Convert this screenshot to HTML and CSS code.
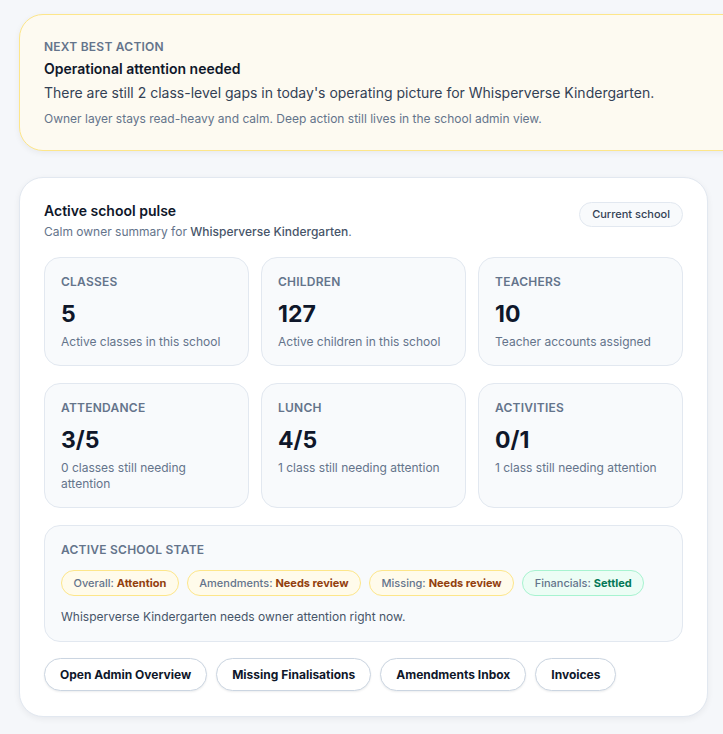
FILE: index.html
```html
<!DOCTYPE html>
<html lang="en">
<head>
<meta charset="utf-8">
<title>Owner overview</title>
<link rel="stylesheet" href="styles.css">
</head>
<body>
<main class="page">
  <section class="nba">
    <div class="eyebrow">Next best action</div>
    <div class="nba-title">Operational attention needed</div>
    <p class="nba-text">There are still 2 class-level gaps in today's operating picture for Whisperverse Kindergarten.</p>
    <p class="nba-note">Owner layer stays read-heavy and calm. Deep action still lives in the school admin view.</p>
  </section>

  <section class="pulse">
    <header class="pulse-head">
      <div>
        <h2 class="pulse-title">Active school pulse</h2>
        <p class="pulse-sub">Calm owner summary for <strong>Whisperverse Kindergarten</strong>.</p>
      </div>
      <span class="chip">Current school</span>
    </header>

    <div class="stats">
      <div class="stat">
        <div class="eyebrow">Classes</div>
        <div class="stat-value">5</div>
        <div class="stat-desc">Active classes in this school</div>
      </div>
      <div class="stat">
        <div class="eyebrow">Children</div>
        <div class="stat-value">127</div>
        <div class="stat-desc">Active children in this school</div>
      </div>
      <div class="stat">
        <div class="eyebrow">Teachers</div>
        <div class="stat-value">10</div>
        <div class="stat-desc">Teacher accounts assigned</div>
      </div>
      <div class="stat">
        <div class="eyebrow">Attendance</div>
        <div class="stat-value">3/5</div>
        <div class="stat-desc">0 classes still needing attention</div>
      </div>
      <div class="stat">
        <div class="eyebrow">Lunch</div>
        <div class="stat-value">4/5</div>
        <div class="stat-desc">1 class still needing attention</div>
      </div>
      <div class="stat">
        <div class="eyebrow">Activities</div>
        <div class="stat-value">0/1</div>
        <div class="stat-desc">1 class still needing attention</div>
      </div>
    </div>

    <div class="state">
      <div class="eyebrow">Active school state</div>
      <div class="pills">
        <span class="pill warn">Overall: <b>Attention</b></span>
        <span class="pill warn">Amendments: <b>Needs review</b></span>
        <span class="pill warn">Missing: <b>Needs review</b></span>
        <span class="pill ok">Financials: <b>Settled</b></span>
      </div>
      <p class="state-text">Whisperverse Kindergarten needs owner attention right now.</p>
    </div>

    <div class="actions">
      <button class="btn">Open Admin Overview</button>
      <button class="btn">Missing Finalisations</button>
      <button class="btn">Amendments Inbox</button>
      <button class="btn">Invoices</button>
    </div>
  </section>
</main>
</body>
</html>
```

FILE: styles.css
```css
* { box-sizing: border-box; }
html, body { margin: 0; padding: 0; }
body {
  background: #f5f7fa;
  font-family: Inter, "Noto Sans", "Liberation Sans", sans-serif;
  color: #0f172a;
  overflow: hidden;
  width: 723px;
  height: 734px;
}
.page {
  padding: 14px 0 0 19px;
  display: flex;
  flex-direction: column;
  gap: 26px;
  align-items: flex-start;
}
.eyebrow {
  font-size: 12px;
  line-height: 16px;
  font-weight: 600;
  letter-spacing: 0.02em;
  text-transform: uppercase;
  color: #64748b;
}
.nba {
  width: 730px;
  background: #fdfaf1;
  border: 1px solid #fde68a;
  border-radius: 24px;
  padding: 24px 24px 22px 24px;
  box-shadow: 0 2px 6px rgba(15, 23, 42, 0.06);
}
.nba-title {
  margin-top: 4px;
  font-size: 14px;
  line-height: 20px;
  font-weight: 600;
}
.nba-text {
  margin: 3px 0 0;
  font-size: 14px;
  line-height: 22px;
  color: #334155;
}
.nba-note {
  margin: 6px 0 0;
  font-size: 12px;
  line-height: 18px;
  color: #64748b;
}
.pulse {
  width: 689px;
  background: #ffffff;
  border: 1px solid #e2e8f0;
  border-radius: 24px;
  padding: 23px 24px 25px;
  box-shadow: 0 2px 6px rgba(15, 23, 42, 0.06);
}
.pulse-head {
  display: flex;
  justify-content: space-between;
  align-items: flex-start;
}
.pulse-title {
  margin: 0;
  font-size: 14px;
  line-height: 20px;
  font-weight: 600;
}
.pulse-sub {
  margin: 2px 0 0;
  font-size: 12px;
  line-height: 18px;
  color: #64748b;
}
.pulse-sub strong { font-weight: 500; color: #475569; }
.chip {
  margin-top: 1px;
  font-size: 11px;
  line-height: 15px;
  font-weight: 500;
  color: #334155;
  background: #f8fafc;
  border: 1px solid #e2e8f0;
  border-radius: 999px;
  padding: 4px 12px;
}
.stats {
  margin-top: 16px;
  display: grid;
  grid-template-columns: repeat(3, 1fr);
  column-gap: 12px;
  row-gap: 17px;
}
.stat {
  background: #f8fafc;
  border: 1px solid #e2e8f0;
  border-radius: 16px;
  padding: 16px 16px 15px;
}
.stat-value {
  margin-top: 9px;
  font-size: 23px;
  line-height: 30px;
  font-weight: 700;
  color: #0f172a;
}
.stat-desc {
  margin-top: 5px;
  font-size: 12px;
  line-height: 16px;
  color: #64748b;
}
.state {
  margin-top: 17px;
  background: #f8fafc;
  border: 1px solid #e2e8f0;
  border-radius: 16px;
  padding: 16px 16px 15px;
}
.pills {
  margin-top: 12px;
  display: flex;
  flex-wrap: wrap;
  gap: 8px;
}
.pill {
  font-size: 11px;
  line-height: 14px;
  font-weight: 500;
  color: #64748b;
  border-radius: 999px;
  padding: 5px 11.5px;
}
.pill b { font-weight: 700; }
.pill.warn { background: #fffbeb; border: 1px solid #fde68a; }
.pill.warn b { color: #92400e; }
.pill.ok { background: #ecfdf5; border: 1px solid #a7f3d0; }
.pill.ok b { color: #047857; }
.state-text {
  margin: 12px 0 0;
  font-size: 12px;
  line-height: 18px;
  color: #475569;
}
.actions {
  margin-top: 16px;
  display: flex;
  gap: 9px;
}
.btn {
  font-family: inherit;
  font-size: 12px;
  line-height: 15px;
  font-weight: 700;
  color: #0f172a;
  background: #ffffff;
  border: 1px solid #cbd5e1;
  border-radius: 999px;
  padding: 8px 15px;
  box-shadow: 0 1px 2px rgba(15, 23, 42, 0.08);
}
```
